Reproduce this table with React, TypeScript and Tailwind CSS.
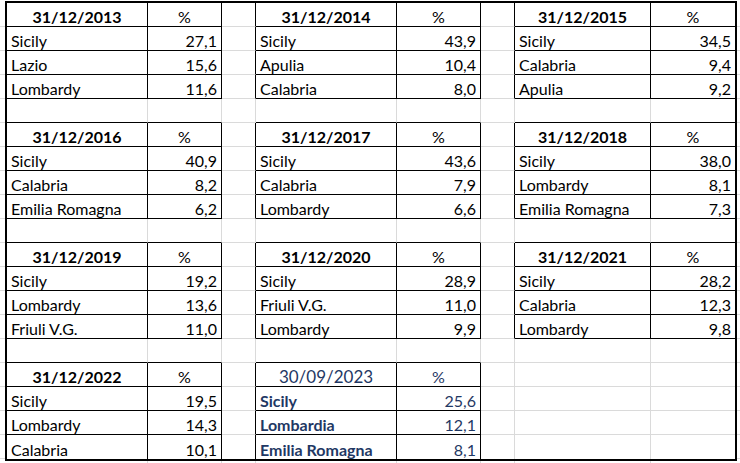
type Cell = { text: string; kind: "head" | "pct" | "name" | "num"; blue?: boolean };

const BLOCKS: { row: number; col: number; date: string; blue?: boolean; items: [string, string][] }[] = [
  { row: 0, col: 0, date: "31/12/2013", items: [["Sicily", "27,1"], ["Lazio", "15,6"], ["Lombardy", "11,6"]] },
  { row: 0, col: 3, date: "31/12/2014", items: [["Sicily", "43,9"], ["Apulia", "10,4"], ["Calabria", "8,0"]] },
  { row: 0, col: 6, date: "31/12/2015", items: [["Sicily", "34,5"], ["Calabria", "9,4"], ["Apulia", "9,2"]] },
  { row: 5, col: 0, date: "31/12/2016", items: [["Sicily", "40,9"], ["Calabria", "8,2"], ["Emilia Romagna", "6,2"]] },
  { row: 5, col: 3, date: "31/12/2017", items: [["Sicily", "43,6"], ["Calabria", "7,9"], ["Lombardy", "6,6"]] },
  { row: 5, col: 6, date: "31/12/2018", items: [["Sicily", "38,0"], ["Lombardy", "8,1"], ["Emilia Romagna", "7,3"]] },
  { row: 10, col: 0, date: "31/12/2019", items: [["Sicily", "19,2"], ["Lombardy", "13,6"], ["Friuli V.G.", "11,0"]] },
  { row: 10, col: 3, date: "31/12/2020", items: [["Sicily", "28,9"], ["Friuli V.G.", "11,0"], ["Lombardy", "9,9"]] },
  { row: 10, col: 6, date: "31/12/2021", items: [["Sicily", "28,2"], ["Calabria", "12,3"], ["Lombardy", "9,8"]] },
  { row: 15, col: 0, date: "31/12/2022", items: [["Sicily", "19,5"], ["Lombardy", "14,3"], ["Calabria", "10,1"]] },
  { row: 15, col: 3, date: "30/09/2023", blue: true, items: [["Sicily", "25,6"], ["Lombardia", "12,1"], ["Emilia Romagna", "8,1"]] },
];

const ROWS = 19;
const COLS = 8;

const cells = new Map<string, Cell>();
for (const b of BLOCKS) {
  cells.set(`${b.row}-${b.col}`, { text: b.date, kind: "head", blue: b.blue });
  cells.set(`${b.row}-${b.col + 1}`, { text: "%", kind: "pct", blue: b.blue });
  b.items.forEach(([name, val], i) => {
    cells.set(`${b.row + 1 + i}-${b.col}`, { text: name, kind: "name", blue: b.blue });
    cells.set(`${b.row + 1 + i}-${b.col + 1}`, { text: val, kind: "num", blue: b.blue });
  });
}

const inTable = (r: number, c: number) => cells.has(`${r}-${c}`);

function GridCell({ r, c }: { r: number; c: number }) {
  const cell = cells.get(`${r}-${c}`);
  const lastCol = c === COLS - 1;
  const lastRow = r === ROWS - 1;
  const rightBlack = inTable(r, c) || inTable(r, c + 1);
  const bottomBlack = inTable(r, c) || inTable(r + 1, c);

  let border = "";
  if (!lastCol) border += rightBlack ? " border-r border-r-black" : " border-r border-r-[#dadada]";
  if (!lastRow) border += bottomBlack ? " border-b border-b-black" : " border-b border-b-[#dadada]";

  let text = "";
  if (cell) {
    const color = cell.blue ? " text-[#1f3864]" : " text-black";
    if (cell.kind === "head") text = "justify-center" + (cell.blue ? " text-[17px]" : " font-bold") + color;
    if (cell.kind === "pct") text = "justify-center" + color;
    if (cell.kind === "name") text = "justify-start pl-[4px]" + (cell.blue ? " font-bold" : "") + color;
    if (cell.kind === "num") text = "justify-end pr-[4px]" + color;
  }

  return (
    <div className={`flex items-end pb-[1px] leading-none whitespace-nowrap overflow-hidden${border} ${text}`}>
      {cell?.text}
    </div>
  );
}

export default function App() {
  const rows = Array.from({ length: ROWS }, (_, i) => i);
  const cols = Array.from({ length: COLS }, (_, i) => i);

  return (
    <div className="w-[740px] h-[463px] bg-white overflow-hidden flex pt-[1px] font-['Lato','Liberation_Sans',sans-serif] text-[16px]">
      <div className="w-[5px] flex flex-col pt-[2px]">
        {rows.map((r) => (
          <div key={r} className="h-[24px] border-b border-b-[#dadada]" />
        ))}
      </div>
      <div className="flex flex-col">
        <div className="border-2 border-black grid grid-cols-[141px_74px_34px_141px_84px_34px_136px_84px] auto-rows-[24px]">
          {rows.map((r) => cols.map((c) => <GridCell key={`${r}-${c}`} r={r} c={c} />))}
        </div>
        <div className="h-[4px] grid grid-cols-[2px_141px_74px_34px_141px_84px_34px_136px_84px]">
          <div />
          {cols.slice(0, COLS - 1).map((c) => (
            <div key={c} className="border-r border-r-[#dadada]" />
          ))}
        </div>
      </div>
      <div className="w-[3px] flex flex-col pt-[2px]">
        {rows.map((r) => (
          <div key={r} className="h-[24px] border-b border-b-[#dadada]" />
        ))}
      </div>
    </div>
  );
}
